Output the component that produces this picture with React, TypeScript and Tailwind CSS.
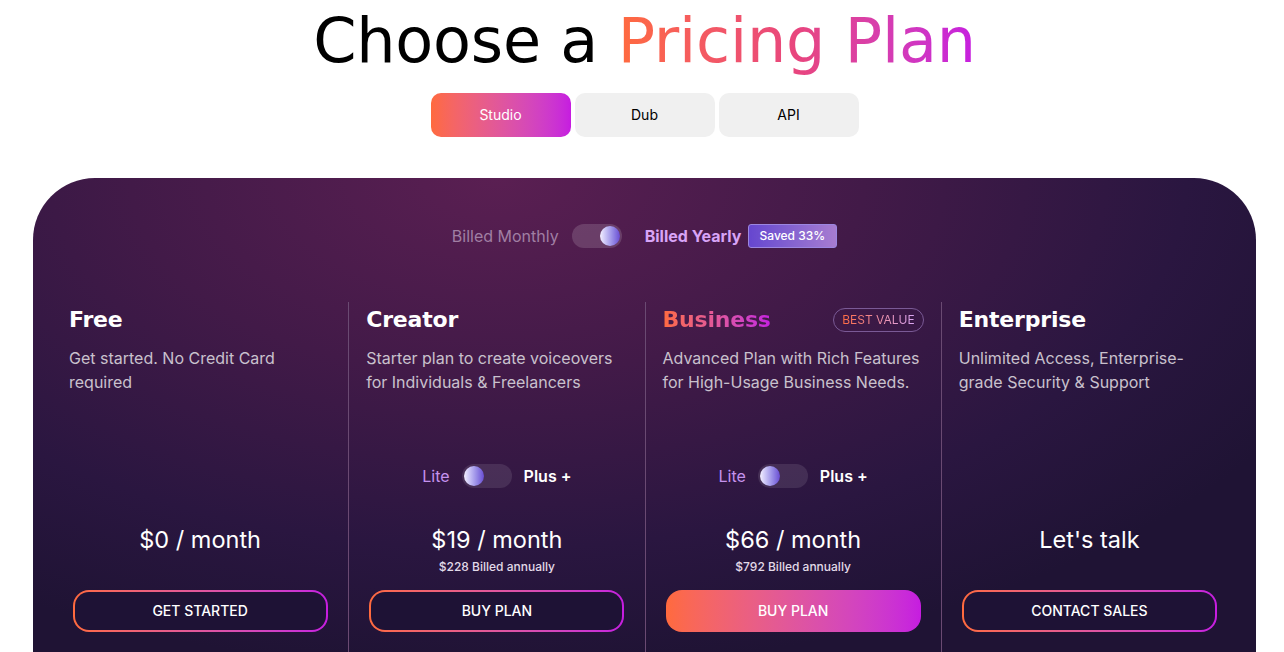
import React, { useState } from 'react';

type Plan = {
  name: string;
  desc: string;
  price: string;
  billed?: string;
  cta: string;
  tiers?: boolean;
  featured?: boolean;
};

const plans: Plan[] = [
  { name: 'Free', desc: 'Get started. No Credit Card required', price: '$0 / month', cta: 'GET STARTED' },
  {
    name: 'Creator',
    desc: 'Starter plan to create voiceovers for Individuals & Freelancers',
    price: '$19 / month',
    billed: '$228 Billed annually',
    cta: 'BUY PLAN',
    tiers: true,
  },
  {
    name: 'Business',
    desc: 'Advanced Plan with Rich Features for High-Usage Business Needs.',
    price: '$66 / month',
    billed: '$792 Billed annually',
    cta: 'BUY PLAN',
    tiers: true,
    featured: true,
  },
  { name: 'Enterprise', desc: 'Unlimited Access, Enterprise-grade Security & Support', price: "Let's talk", cta: 'CONTACT SALES' },
];

const Knob = () => (
  <span className="block w-5 h-5 rounded-full bg-gradient-to-r from-[#f4efff] to-[#6a4bd2]" />
);

const Switch = ({ on, track }: { on: boolean; track: string }) => (
  <span className={`flex items-center w-[50px] h-6 rounded-full px-[2px] ${track} ${on ? 'justify-end' : 'justify-start'}`}>
    <Knob />
  </span>
);

const PlanColumn = ({ plan, first }: { plan: Plan; first: boolean }) => (
  <div className={`flex flex-col px-[17px] pt-[4px] pb-10 ${first ? '' : 'border-l border-[#6a4a72]'}`}>
    <div className="flex items-center justify-between h-7">
      <h3
        className={`font-['DejaVu_Sans',sans-serif] font-bold text-[22px] leading-7 tracking-[-0.2px] ${
          plan.featured
            ? 'bg-gradient-to-r from-[#ff6a3d] to-[#c61ce0] bg-clip-text text-transparent'
            : 'text-white'
        }`}
      >
        {plan.name}
      </h3>
      {plan.featured && (
        <span className="h-6 px-2 flex items-center rounded-full border border-[#7a5a96] text-xs">
          <span className="bg-gradient-to-r from-[#ff6a3d] to-[#d9a6f5] bg-clip-text text-transparent">BEST VALUE</span>
        </span>
      )}
    </div>
    <p className="mt-3 text-base leading-6 text-[#c9c1cd] pr-1">{plan.desc}</p>
    <div className={`mt-[70px] h-6 flex items-center justify-center gap-3 ${plan.tiers ? '' : 'invisible'}`}>
      <span className="text-base text-[#c592ee]">Lite</span>
      <Switch on={false} track="bg-white/10" />
      <span className="text-base font-semibold text-white">Plus +</span>
    </div>
    <div className="mt-9 text-center text-[23.5px] leading-8 text-white">{plan.price}</div>
    <div className={`mt-[3px] h-4 text-center text-xs leading-4 font-medium text-[#e2dae8] ${plan.billed ? '' : 'invisible'}`}>
      {plan.billed ?? '-'}
    </div>
    {plan.featured ? (
      <button className="mt-[15px] mx-auto w-[255px] h-[42px] rounded-2xl bg-gradient-to-r from-[#ff6a3d] to-[#c61ce0] text-sm font-medium text-white">
        {plan.cta}
      </button>
    ) : (
      <div className="mt-[15px] mx-auto w-[255px] h-[42px] rounded-2xl p-[2px] bg-gradient-to-r from-[#ff6a3d] to-[#c61ce0]">
        <button className="w-full h-full rounded-[14px] bg-[#1e1235] text-sm font-medium text-white">{plan.cta}</button>
      </div>
    )}
  </div>
);

export default function App() {
  const [tab, setTab] = useState('Studio');

  return (
    <div className="min-h-screen bg-white flex flex-col items-center pl-[5px] font-['Inter',sans-serif] overflow-hidden">
      <h1 className="pt-[5px] font-['DejaVu_Sans',sans-serif] text-[62px] leading-[72px] tracking-[-0.2px] text-black">
        Choose a{' '}
        <span className="bg-gradient-to-r from-[#ff6a3d] via-[#e8457e] to-[#c61ce0] bg-clip-text text-transparent">
          Pricing Plan
        </span>
      </h1>

      <div className="mt-4 flex gap-1">
        {['Studio', 'Dub', 'API'].map((t) => (
          <button
            key={t}
            onClick={() => setTab(t)}
            className={`w-[140px] h-11 rounded-[10px] text-sm ${
              tab === t ? 'bg-gradient-to-r from-[#ff6a3d] to-[#c61ce0] text-white' : 'bg-[#f0f0f0] text-black'
            }`}
          >
            {t}
          </button>
        ))}
      </div>

      <div className="self-start ml-[28px] mt-[41px] w-[1223px] min-h-[520px] rounded-t-[62px] bg-[radial-gradient(ellipse_75%_95%_at_38%_0%,#5a1f52_0%,#421a48_40%,#2a1640_75%,#1f1334_100%)] px-[19px] pt-[46px]">
        <div className="flex items-center justify-center h-6">
          <span className="text-base text-[#a07fa3]">Billed Monthly</span>
          <span className="ml-[13px]">
            <Switch on={true} track="bg-white/15" />
          </span>
          <span className="ml-[23px] text-base font-bold text-[#d8a4f7]">Billed Yearly</span>
          <span className="ml-[6px] h-6 px-[11px] flex items-center rounded-[3px] border border-[#9b86e0] bg-gradient-to-r from-[#6646cf] to-[#a77cd0] text-xs font-medium text-white">
            Saved 33%
          </span>
        </div>

        <div className="mt-[54px] grid grid-cols-4">
          {plans.map((p, i) => (
            <PlanColumn key={p.name} plan={p} first={i === 0} />
          ))}
        </div>
      </div>
    </div>
  );
}
